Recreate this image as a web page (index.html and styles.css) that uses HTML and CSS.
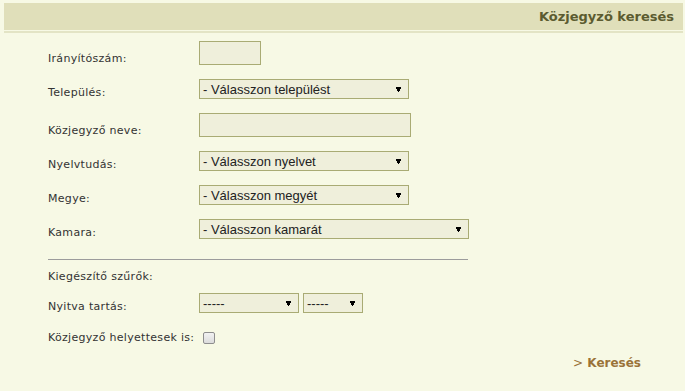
FILE: index.html
```html
<!DOCTYPE html>
<html lang="hu">
<head>
<meta charset="utf-8">
<title>Közjegyző keresés</title>
<link rel="stylesheet" href="styles.css">
</head>
<body>
<div class="header-wrap">
  <h1 class="header">Közjegyző keresés</h1>
</div>
<form class="search">
  <div class="row">
    <label class="lbl">Irányítószám:</label>
    <input class="field field-zip" type="text">
  </div>
  <div class="row">
    <label class="lbl">Település:</label>
    <select class="sel sel-mid"><option>- Válasszon települést</option></select>
  </div>
  <div class="row">
    <label class="lbl">Közjegyző neve:</label>
    <input class="field field-name" type="text">
  </div>
  <div class="row">
    <label class="lbl">Nyelvtudás:</label>
    <select class="sel sel-mid"><option>- Válasszon nyelvet</option></select>
  </div>
  <div class="row">
    <label class="lbl">Megye:</label>
    <select class="sel sel-mid"><option>- Válasszon megyét</option></select>
  </div>
  <div class="row">
    <label class="lbl">Kamara:</label>
    <select class="sel sel-wide"><option>- Válasszon kamarát</option></select>
  </div>
  <hr class="sep">
  <div class="extra-title">Kiegészítő szűrők:</div>
  <div class="row row-open">
    <label class="lbl">Nyitva tartás:</label>
    <div class="pair">
      <select class="sel sel-day"><option>-----</option></select>
      <select class="sel sel-time"><option>-----</option></select>
    </div>
  </div>
  <div class="row-check">
    <label class="lbl-inline">Közjegyző helyettesek is:</label>
    <input class="check" type="checkbox">
  </div>
  <div class="actions">
    <a class="go" href="#"><span class="go-arrow">&gt;</span> Keresés</a>
  </div>
</form>
</body>
</html>
```
FILE: styles.css
```css
html, body {
  margin: 0;
  padding: 0;
}
body {
  background: #f7f9e5;
  font-family: "DejaVu Sans", Verdana, sans-serif;
  font-size: 11px;
  color: #333;
}
.header-wrap {
  margin: 3px 2px 0 4px;
  padding-bottom: 1px;
  border-bottom: 2px solid #e3e4c5;
}
.header {
  margin: 0;
  height: 27px;
  line-height: 28px;
  background: #e0dfba;
  text-align: right;
  padding-right: 9px;
  font-size: 13px;
  font-weight: bold;
  color: #5b5b30;
}
.search {
  padding: 8px 0 0 48px;
  display: flex;
  flex-direction: column;
}
.row {
  display: grid;
  grid-template-columns: 151px auto;
  align-items: end;
  margin-bottom: 14px;
}
.lbl, .lbl-inline {
  line-height: 13px;
  margin-bottom: 0;
  letter-spacing: 0.3px;
}
.field {
  box-sizing: border-box;
  height: 24px;
  border: 1px solid #a9ab74;
  background: #efefdb;
  margin: 0;
  padding: 0 3px;
}
.field-zip { width: 62px; }
.field-name { width: 212px; }
.sel {
  -webkit-appearance: none;
  appearance: none;
  box-sizing: border-box;
  height: 20px;
  margin: 0;
  border: 1px solid #a9ab74;
  border-radius: 0;
  background-color: #efefdb;
  background-image: url("data:image/svg+xml,%3Csvg xmlns='http://www.w3.org/2000/svg' width='5' height='5'%3E%3Cpath d='M0 0h5v2h-1v2h-1v1h-1v-1h-1v-2h-1z' fill='%23000'/%3E%3C/svg%3E");
  background-repeat: no-repeat;
  background-position: right 7px center;
  font-family: "Liberation Sans", Arial, sans-serif;
  font-size: 13px;
  color: #222;
  padding: 0 0 0 3px;
  outline: none;
}
.sel-mid { width: 210px; }
.sel-wide { width: 270px; }
.sel-day { width: 100px; }
.sel-time { width: 60px; }
.pair {
  display: flex;
  gap: 4px;
}
.sep {
  margin: 6px 0 0 0;
  width: 420px;
  border: 0;
  border-top: 1px solid #9c9c9c;
  height: 0;
}
.extra-title {
  margin-top: 10px;
  line-height: 13px;
  letter-spacing: 0.3px;
}
.row-open {
  margin-top: 10px;
  margin-bottom: 18px;
}
.row-check {
  display: flex;
  align-items: end;
}
.check {
  -webkit-appearance: none;
  appearance: none;
  margin: 0 0 0 9px;
  width: 12px;
  height: 12px;
  border: 1px solid #8e8e8e;
  border-radius: 2px;
  background: linear-gradient(#f2f2f2, #dcdcdc);
}
.actions {
  display: flex;
  justify-content: flex-end;
  padding-right: 44px;
  margin-top: 12px;
}
.go {
  text-decoration: none;
  color: #9a7339;
  font-weight: bold;
  font-size: 12px;
}
.go-arrow {
  font-weight: normal;
}
```
